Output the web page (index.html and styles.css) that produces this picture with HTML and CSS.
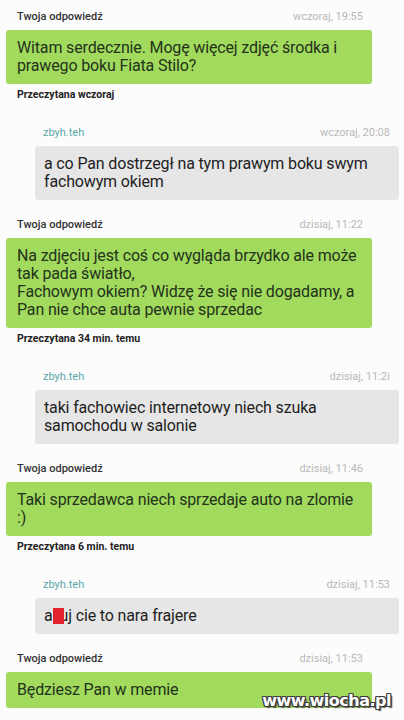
FILE: index.html
```html
<!DOCTYPE html>
<html lang="pl">
<head>
  <meta charset="UTF-8">
  <meta name="viewport" content="width=device-width, initial-scale=1.0">
  <title>Wiadomości</title>
  <link rel="stylesheet" href="styles.css">
</head>
<body>
  <div class="chat">
    <!-- moja wiadomość -->
    <div class="msg mine">
      <div class="meta"><span class="author">Twoja odpowiedź</span><span class="time">wczoraj, 19:55</span></div>
      <div class="bubble">Witam serdecznie. Mogę więcej zdjęć środka i prawego boku Fiata Stilo?</div>
      <div class="read">Przeczytana wczoraj</div>
    </div>

    <div class="msg theirs">
      <div class="meta"><span class="author">zbyh.teh</span><span class="time">wczoraj, 20:08</span></div>
      <div class="bubble">a co Pan dostrzegł na tym prawym boku swym fachowym okiem</div>
    </div>

    <div class="msg mine">
      <div class="meta"><span class="author">Twoja odpowiedź</span><span class="time">dzisiaj, 11:22</span></div>
      <div class="bubble">Na zdjęciu jest coś co wygląda brzydko ale może tak pada światło,<br>Fachowym okiem? Widzę że się nie dogadamy, a Pan nie chce auta pewnie sprzedac</div>
      <div class="read">Przeczytana 34 min. temu</div>
    </div>

    <div class="msg theirs">
      <div class="meta"><span class="author">zbyh.teh</span><span class="time">dzisiaj, 11:2ℹ</span></div>
      <div class="bubble">taki fachowiec internetowy niech szuka samochodu w salonie</div>
    </div>

    <div class="msg mine">
      <div class="meta"><span class="author">Twoja odpowiedź</span><span class="time">dzisiaj, 11:46</span></div>
      <div class="bubble">Taki sprzedawca niech sprzedaje auto na zlomie :)</div>
      <div class="read">Przeczytana 6 min. temu</div>
    </div>

    <div class="msg theirs">
      <div class="meta"><span class="author">zbyh.teh</span><span class="time">dzisiaj, 11:53</span></div>
      <div class="bubble">a<span class="censor"></span>uj cie to nara frajere</div>
    </div>

    <div class="msg mine">
      <div class="meta"><span class="author">Twoja odpowiedź</span><span class="time">dzisiaj, 11:53</span></div>
      <div class="bubble">Będziesz Pan w memie</div>
    </div>
  </div>

  <div class="watermark">www.wiocha.pl</div>
</body>
</html>
```

FILE: styles.css
```css
body, html {
  margin: 0; padding: 0;
  font-family: Roboto, "Liberation Sans", sans-serif;
  background: #fcfcfc; color: #222;
  height: 100%; overflow: hidden;
}
.chat { padding-top: 10px; }
/* wiersz z autorem i godziną */
.meta {
  display: flex; justify-content: space-between;
  font-size: 11px; line-height: 14px;
  padding-bottom: 6px;
}
.author { color: #333; font-weight: 500; }
.time { color: #b9b9b9; }
.bubble {
  font-size: 16px; line-height: 18px; letter-spacing: -0.15px;
  padding: 9px 10px 9px 11px;
  border-radius: 3px;
}
.read {
  font-size: 10.5px; line-height: 14px; font-weight: 700;
  color: #222; padding: 4px 11px 6px;
}
/* moje wiadomości */
.msg.mine { margin: 0 32px 18px 6px; }
.msg.mine .meta { padding-left: 11px; padding-right: 9px; }
.msg.mine .bubble { background: #a1da5d; color: #24331b; }
/* wiadomości sprzedawcy */
.msg.theirs { margin: 0 5px 18px 35px; }
.msg.theirs .meta { padding-left: 8px; padding-right: 9px; }
.msg.theirs .author { color: #5aa8a8; font-weight: 400; }
.msg.theirs .bubble { background: #e6e6e6; color: #1e1e1e; padding-left: 9px; }
.censor {
  display: inline-block; position: relative;
  width: 11px; height: 16px; margin-right: -4px;
  vertical-align: -3px; background: #e2232e;
}
.watermark {
  position: absolute; right: 13px; bottom: 10px;
  font-family: "DejaVu Sans", sans-serif; font-weight: 700;
  font-size: 16px; letter-spacing: -0.5px; color: #fff;
  text-shadow: 1px 1px 0 #3d3d3d, -1px -1px 0 #3d3d3d, 1px -1px 0 #3d3d3d, -1px 1px 0 #3d3d3d,
    0 1px 0 #3d3d3d, 0 -1px 0 #3d3d3d, 1px 0 0 #3d3d3d, -1px 0 0 #3d3d3d, 2px 2px 1px #555;
}
```
